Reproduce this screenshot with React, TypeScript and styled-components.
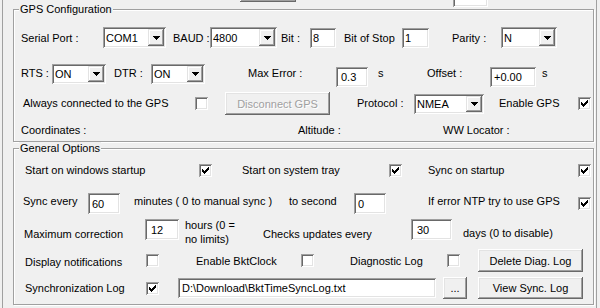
import styled, { createGlobalStyle } from 'styled-components'

const GlobalStyle = createGlobalStyle`
  html, body {
    margin: 0;
    padding: 0;
    background: #f0f0f0;
  }
  body {
    font-family: 'Liberation Sans', Arial, sans-serif;
    font-size: 11px;
    color: #000;
  }
`

const Page = styled.div`
  width: 600px;
  height: 308px;
  overflow: hidden;
  background: #f0f0f0;
`

const TabPage = styled.div`
  margin: 0 3px 0 2px;
  height: 100%;
  box-sizing: border-box;
  border-left: 1px solid #a0a0a0;
  border-right: 1px solid #a0a0a0;
`

const TopRow = styled.div`
  height: 9px;
  display: flex;
  align-items: flex-end;
  padding-left: 237px;
`

const Group = styled.div<{ $h: number; $mt?: number }>`
  margin: ${(p) => p.$mt ?? 0}px 0 0 10px;
  width: 581px;
  height: ${(p) => p.$h}px;
  box-sizing: border-box;
  border: 1px solid #a0a0a0;
  box-shadow: inset 1px 1px #fff, 1px 1px #fff;
  display: flex;
  flex-direction: column;
`

const Caption = styled.div`
  align-self: flex-start;
  height: 13px;
  line-height: 13px;
  margin: -7px 0 -6px 5px;
  padding: 0 1px;
  background: #f0f0f0;
  white-space: nowrap;
`

const Row = styled.div<{ $mt: number; $h: number; $pl: number }>`
  display: flex;
  align-items: center;
  margin-top: ${(p) => p.$mt}px;
  height: ${(p) => p.$h}px;
  padding-left: ${(p) => p.$pl}px;
`

const Label = styled.div<{ $w?: number; $mt?: number }>`
  flex: none;
  width: ${(p) => (p.$w ? `${p.$w}px` : 'auto')};
  margin-top: ${(p) => p.$mt ?? 0}px;
  line-height: 13px;
  white-space: nowrap;
`

const Wrap = styled(Label)`
  line-height: 14px;
`

const Cell = styled.div<{ $w: number }>`
  flex: none;
  width: ${(p) => p.$w}px;
  display: flex;
  align-items: center;
`

const sunken = `
  background: #fff;
  box-shadow: inset 1px 1px #a0a0a0, inset -1px -1px #fff,
    inset 2px 2px #696969, inset -2px -2px #e3e3e3;
`

const raised = `
  background: #f0f0f0;
  box-shadow: inset -1px -1px #696969, inset 1px 1px #fff,
    inset -2px -2px #a0a0a0, inset 2px 2px #e3e3e3;
`

const Edit = styled.div<{ $w: number; $h: number; $pl?: number; $mt?: number; $mb?: number; $ml?: number }>`
  flex: none;
  width: ${(p) => p.$w}px;
  height: ${(p) => p.$h}px;
  box-sizing: border-box;
  margin: ${(p) => p.$mt ?? 0}px 0 ${(p) => p.$mb ?? 0}px ${(p) => p.$ml ?? 0}px;
  padding-left: ${(p) => p.$pl ?? 3}px;
  display: flex;
  align-items: center;
  white-space: nowrap;
  overflow: hidden;
  ${sunken}
`

const Combo = styled.div<{ $w: number; $h: number }>`
  flex: none;
  width: ${(p) => p.$w}px;
  height: ${(p) => p.$h}px;
  box-sizing: border-box;
  padding: 2px;
  display: flex;
  ${sunken}
`

const ComboText = styled.div`
  flex: 1;
  padding-left: 1px;
  display: flex;
  align-items: center;
  white-space: nowrap;
  overflow: hidden;
`

const DropButton = styled.div`
  width: 16px;
  flex: none;
  display: flex;
  align-items: center;
  justify-content: center;
  box-shadow: inset -1px -1px #696969, inset 1px 1px #e3e3e3,
    inset -2px -2px #a0a0a0, inset 2px 2px #fff;
  background: #f0f0f0;
`

const Button = styled.div<{ $w: number; $h: number; $disabled?: boolean; $mb?: number }>`
  flex: none;
  width: ${(p) => p.$w}px;
  height: ${(p) => p.$h}px;
  margin-bottom: ${(p) => p.$mb ?? 0}px;
  display: flex;
  align-items: center;
  justify-content: center;
  white-space: nowrap;
  color: ${(p) => (p.$disabled ? '#a0a0a0' : '#000')};
  text-shadow: ${(p) => (p.$disabled ? '1px 1px #fff' : 'none')};
  ${raised}
`

const Box = styled.div`
  flex: none;
  width: 13px;
  height: 13px;
  box-sizing: border-box;
  display: flex;
  align-items: center;
  justify-content: center;
  ${sunken}
`

const CHECK = ['......#', '.....##', '#...###', '##.###.', '#####..', '.###...', '..#....']

function CheckBox({ checked }: { checked?: boolean }) {
  return (
    <Box>
      {checked && (
        <svg width="7" height="7" viewBox="0 0 7 7" shapeRendering="crispEdges">
          {CHECK.flatMap((line, y) =>
            line.split('').map((c, x) => (c === '#' ? <rect key={`${x}-${y}`} x={x} y={y} width="1" height="1" fill="#000" /> : null)),
          )}
        </svg>
      )}
    </Box>
  )
}

function Select({ w, h = 20, value }: { w: number; h?: number; value: string }) {
  return (
    <Combo $w={w} $h={h}>
      <ComboText>{value}</ComboText>
      <DropButton>
        <svg width="7" height="4" viewBox="0 0 7 4" shapeRendering="crispEdges">
          <path d="M0 0h7v1H0zM1 1h5v1H1zM2 2h3v1H2zM3 3h1v1H3z" fill="#000" />
        </svg>
      </DropButton>
    </Combo>
  )
}

export default function App() {
  return (
    <Page>
      <GlobalStyle />
      <TabPage>
        <TopRow>
          <Button $w={56} $h={22} $mb={7} />
          <Edit $w={35} $h={20} $ml={157} $mb={2} />
        </TopRow>

        <Group $h={133}>
          <Caption>GPS Configuration</Caption>

          <Row $mt={17} $h={21} $pl={7}>
            <Label $w={82} $mt={2}>Serial Port :</Label>
            <Cell $w={70}><Select w={63} h={21} value="COM1" /></Cell>
            <Label $w={37} $mt={2}>BAUD :</Label>
            <Cell $w={71}><Select w={67} h={21} value="4800" /></Cell>
            <Label $w={29} $mt={2}>Bit :</Label>
            <Cell $w={34}><Edit $w={26} $h={20}>8</Edit></Cell>
            <Label $w={58} $mt={2}>Bit of Stop</Label>
            <Cell $w={50}><Edit $w={27} $h={20}>1</Edit></Cell>
            <Label $w={49} $mt={2}>Parity :</Label>
            <Cell $w={56}><Select w={56} h={21} value="N" /></Cell>
          </Row>

          <Row $mt={14} $h={23} $pl={7}>
            <Label $w={31}>RTS :</Label>
            <Cell $w={62}><Select w={54} value="ON" /></Cell>
            <Label $w={37}>DTR :</Label>
            <Cell $w={97}><Select w={54} value="ON" /></Cell>
            <Label $w={88}>Max Error :</Label>
            <Cell $w={42}><Edit $w={32} $h={20} $mt={6} $pl={5}>0.3</Edit></Cell>
            <Label $w={49}>s</Label>
            <Label $w={63}>Offset :</Label>
            <Cell $w={52}><Edit $w={46} $h={20} $mt={6} $pl={4}>+0.00</Edit></Cell>
            <Label>s</Label>
          </Row>

          <Row $mt={7} $h={23} $pl={9}>
            <Label $w={172}>Always connected to the GPS</Label>
            <Cell $w={30}><CheckBox /></Cell>
            <Cell $w={132}><Button $w={105} $h={23} $disabled>Disconnect GPS</Button></Cell>
            <Label $w={57}>Protocol :</Label>
            <Cell $w={85}><Select w={70} value="NMEA" /></Cell>
            <Label $w={79}>Enable GPS</Label>
            <Cell $w={13}><CheckBox checked /></Cell>
          </Row>

          <Row $mt={9} $h={13} $pl={7}>
            <Label $w={277}>Coordinates :</Label>
            <Label $w={145}>Altitude :</Label>
            <Label>WW Locator :</Label>
          </Row>
        </Group>

        <Group $h={157} $mt={6}>
          <Caption>General Options</Caption>

          <Row $mt={12} $h={18} $pl={11}>
            <Label $w={174}>Start on windows startup</Label>
            <Cell $w={43}><CheckBox checked /></Cell>
            <Label $w={147}>Start on system tray</Label>
            <Cell $w={39}><CheckBox checked /></Cell>
            <Label $w={150}>Sync on startup</Label>
            <Cell $w={13}><CheckBox checked /></Cell>
          </Row>

          <Row $mt={14} $h={21} $pl={9}>
            <Label $w={65} $mt={-5}>Sync every</Label>
            <Cell $w={46}><Edit $w={32} $h={21} $pl={4}>60</Edit></Cell>
            <Label $w={155} $mt={-5}>minutes ( 0 to manual sync )</Label>
            <Label $w={65} $mt={-5}>to second</Label>
            <Cell $w={74}><Edit $w={32} $h={21} $pl={4}>0</Edit></Cell>
            <Label $w={150} $mt={-5}>If error NTP try to use GPS</Label>
            <Cell $w={13}><CheckBox checked /></Cell>
          </Row>

          <Row $mt={5} $h={21} $pl={10}>
            <Label $w={121} $mt={9}>Maximum correction</Label>
            <Cell $w={40}><Edit $w={34} $h={21} $pl={6}>12</Edit></Cell>
            <Wrap $w={78} $mt={5}>
              hours (0 =
              <br />
              no limits)
            </Wrap>
            <Label $w={148} $mt={9}>Checks updates every</Label>
            <Cell $w={52}><Edit $w={41} $h={21} $pl={6}>30</Edit></Cell>
            <Label $mt={7}>days (0 to disable)</Label>
          </Row>

          <Row $mt={9} $h={23} $pl={11}>
            <Label $w={121} $mt={3}>Display notifications</Label>
            <Cell $w={50}><CheckBox /></Cell>
            <Label $w={105} $mt={1}>Enable BktClock</Label>
            <Cell $w={49}><CheckBox /></Cell>
            <Label $w={97} $mt={1}>Diagnostic Log</Label>
            <Cell $w={31}><CheckBox /></Cell>
            <Cell $w={105}><Button $w={105} $h={23}>Delete Diag. Log</Button></Cell>
          </Row>

          <Row $mt={5} $h={22} $pl={11}>
            <Label $w={121}>Synchronization Log</Label>
            <Cell $w={32}><CheckBox checked /></Cell>
            <Cell $w={265}><Edit $w={258} $h={20} $pl={4}>{'D:\\Download\\BktTimeSyncLog.txt'}</Edit></Cell>
            <Cell $w={35}><Button $w={24} $h={22}>...</Button></Cell>
            <Cell $w={105}><Button $w={105} $h={22}>View Sync. Log</Button></Cell>
          </Row>
        </Group>
      </TabPage>
    </Page>
  )
}
